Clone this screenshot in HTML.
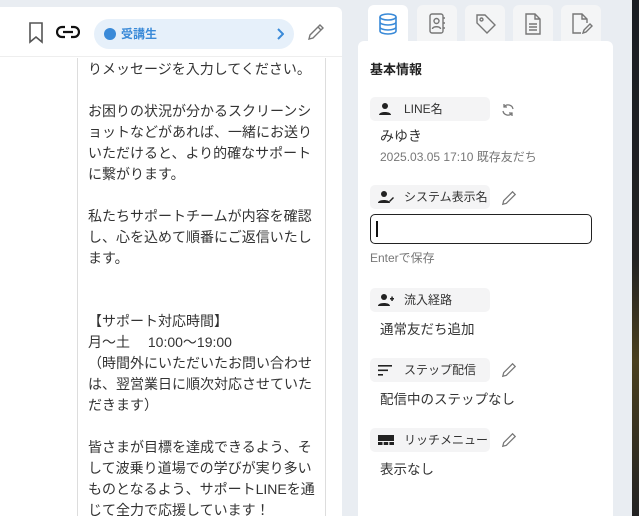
<!DOCTYPE html>
<html><head><meta charset="utf-8"><style>
*{box-sizing:border-box;margin:0;padding:0}
html,body{width:639px;height:516px;overflow:hidden}
body{background:#e9edf2;font-family:"Liberation Sans","Noto Sans CJK JP",sans-serif;position:relative;color:#333}
.left{position:absolute;left:0;top:7px;width:342px;height:509px;background:#fff;border-top-right-radius:6px}
.hdr{position:absolute;left:0;top:0;width:342px;height:50px;border-bottom:1px solid #eee}
.pill{position:absolute;left:94px;top:12px;width:200px;height:30px;border-radius:15px;background:#e6f0fa;color:#3a8ad8;font-weight:bold;font-size:12px;line-height:30px;padding-left:27px}
.pill .dot{position:absolute;left:10px;top:9px;width:12px;height:12px;border-radius:50%;background:#3a8ad8}
.msg{position:absolute;left:77px;top:58px;width:249px;height:458px;overflow:hidden;border-left:1px solid #ddd;border-right:1px solid #ddd;padding:1px 0 0 10px;font-size:14px;line-height:21px;white-space:pre;color:#333}
.dark{position:absolute;left:632px;top:0;width:7px;height:516px;background:linear-gradient(#1a1e24,#222 50%,#4a4020 70%,#222)}
.tab{position:absolute;top:5px;width:40px;height:38px;background:#f4f5f6;border-radius:6px 6px 0 0}
.tab svg{position:absolute;left:10px;top:8px}
.tab.on{background:#fff}
.card{position:absolute;left:358px;top:41px;width:255px;height:475px;background:#fff;border-radius:6px 6px 0 0}
.h{position:absolute;left:12px;top:18px;font-size:13px;font-weight:bold;color:#222}
.lab{position:absolute;left:12px;width:120px;height:24px;background:#f4f4f5;border-radius:5px;font-size:12px;line-height:24px;padding-left:34px;color:#333}
.lab svg{position:absolute;left:8px;top:5px}
.val{position:absolute;left:22px;font-size:13.5px;color:#333}
.pen{position:absolute;left:143px}
</style></head><body>
<div class="left">
 <div class="hdr">
  <svg style="position:absolute;left:28px;top:15px" width="16" height="22" viewBox="0 0 16 22"><path d="M2 1h12v19l-6-5-6 5z" fill="none" stroke="#555" stroke-width="1.6"/></svg>
  <svg style="position:absolute;left:56px;top:17px" width="24" height="16" viewBox="0 0 24 16"><path d="M9 3H6a5 5 0 0 0 0 10h3M15 3h3a5 5 0 0 1 0 10h-3M7 8h10" fill="none" stroke="#111" stroke-width="2.2"/></svg>
  <div class="pill"><span class="dot"></span>受講生<svg style="position:absolute;right:10px;top:9px" width="8" height="12" viewBox="0 0 8 12"><path d="M2 1l5 5-5 5" fill="none" stroke="#3a8ad8" stroke-width="2"/></svg></div>
  <svg style="position:absolute;left:307px;top:16px" width="18" height="18" viewBox="0 0 18 18"><path d="M2 16l1-4L13 2l3 3L6 15z M11 4l3 3" fill="none" stroke="#777" stroke-width="1.4"/></svg>
 </div>
</div>
<div class="msg">りメッセージを入力してください。

お困りの状況が分かるスクリーンシ
ョットなどがあれば、一緒にお送り
いただけると、より的確なサポート
に繋がります。

私たちサポートチームが内容を確認
し、心を込めて順番にご返信いたし
ます。


【サポート対応時間】
月～土　 10:00～19:00
（時間外にいただいたお問い合わせ
は、翌営業日に順次対応させていた
だきます）

皆さまが目標を達成できるよう、そ
して波乗り道場での学びが実り多い
ものとなるよう、サポートLINEを通
じて全力で応援しています！</div>
<div class="dark"></div>
<div class="tab on" style="left:368px"><svg width="20" height="22" viewBox="0 0 20 22" fill="none" stroke="#3a8ad8" stroke-width="1.6"><ellipse cx="10" cy="4" rx="8" ry="3"/><path d="M2 4v14c0 1.7 3.6 3 8 3s8-1.3 8-3V4M2 9c0 1.7 3.6 3 8 3s8-1.3 8-3M2 14c0 1.7 3.6 3 8 3s8-1.3 8-3"/></svg></div>
<div class="tab" style="left:417px"><svg width="20" height="22" viewBox="0 0 20 22" fill="none" stroke="#777" stroke-width="1.4"><rect x="3" y="1" width="13" height="19" rx="2"/><circle cx="9.5" cy="8" r="2.5"/><path d="M5.5 16c0-3 8-3 8 0M16 5h2M16 10h2M16 15h2"/></svg></div>
<div class="tab" style="left:465px"><svg width="22" height="22" viewBox="0 0 22 22" fill="none" stroke="#777" stroke-width="1.4"><path d="M2 2h8l10 10-8 8L2 10z"/><circle cx="6.5" cy="6.5" r="1.5"/></svg></div>
<div class="tab" style="left:513px"><svg width="20" height="22" viewBox="0 0 20 22" fill="none" stroke="#777" stroke-width="1.4"><path d="M3 1h9l5 5v15H3z M12 1v5h5M6 11h8M6 14h8M6 17h8"/></svg></div>
<div class="tab" style="left:561px"><svg width="22" height="22" viewBox="0 0 22 22" fill="none" stroke="#777" stroke-width="1.4"><path d="M10 20H2V1h9l5 5v4M11 1v5h5M12 20l1-3 6-6 2 2-6 6z"/></svg></div>
<div class="card">
 <div class="h">基本情報</div>
 <div class="lab" style="top:56px"><svg width="14" height="14" viewBox="0 0 14 14" fill="#222"><circle cx="7" cy="4" r="3"/><path d="M1 13c0-4 12-4 12 0z"/></svg>LINE名</div>
 <svg style="position:absolute;left:143px;top:62px" width="14" height="14" viewBox="0 0 14 14" fill="none" stroke="#777" stroke-width="1.3"><path d="M12 6A5 5 0 0 0 3 4M2 8a5 5 0 0 0 9 2M3 1v3h3M11 13v-3H8"/></svg>
 <div class="val" style="top:85px;font-size:14px">みゆき</div>
 <div class="val" style="top:107px;font-size:12px;color:#777">2025.03.05 17:10 既存友だち</div>
 <div class="lab" style="top:144px"><svg width="16" height="14" viewBox="0 0 16 14" fill="#222"><circle cx="6" cy="4" r="3"/><path d="M0 13c0-4 12-4 12 0z M11 11l4-4 1 1-4 4z"/></svg>システム表示名</div>
 <svg class="pen" style="top:149px" width="16" height="16" viewBox="0 0 18 18"><path d="M2 16l1-4L13 2l3 3L6 15z" fill="none" stroke="#777" stroke-width="1.4"/></svg>
 <div style="position:absolute;left:12px;top:173px;width:222px;height:30px;border:1.5px solid #222;border-radius:5px"><div style="position:absolute;left:5px;top:6px;width:1.5px;height:16px;background:#111"></div></div>
 <div class="val" style="left:12px;top:208px;font-size:12px;color:#777">Enterで保存</div>
 <div class="lab" style="top:247px"><svg width="16" height="14" viewBox="0 0 16 14" fill="#222"><circle cx="6" cy="4" r="3"/><path d="M0 13c0-4 12-4 12 0z M12 5h4v1.5h-4zM13.3 3.5h1.5v4.5h-1.5z"/></svg>流入経路</div>
 <div class="val" style="top:277px">通常友だち追加</div>
 <div class="lab" style="top:317px"><svg width="14" height="14" viewBox="0 0 14 14" fill="#222"><rect x="0" y="2" width="14" height="1.6"/><rect x="0" y="6.5" width="10" height="1.6"/><rect x="0" y="11" width="5" height="1.6"/></svg>ステップ配信</div>
 <svg class="pen" style="top:321px" width="16" height="16" viewBox="0 0 18 18"><path d="M2 16l1-4L13 2l3 3L6 15z" fill="none" stroke="#777" stroke-width="1.4"/></svg>
 <div class="val" style="top:347px">配信中のステップなし</div>
 <div class="lab" style="top:387px"><svg width="16" height="14" viewBox="0 0 16 14" fill="#222"><rect x="0" y="2" width="16" height="6"/><rect x="0" y="9" width="4.5" height="3"/><rect x="5.7" y="9" width="4.5" height="3"/><rect x="11.4" y="9" width="4.6" height="3"/></svg>リッチメニュー</div>
 <svg class="pen" style="top:391px" width="16" height="16" viewBox="0 0 18 18"><path d="M2 16l1-4L13 2l3 3L6 15z" fill="none" stroke="#777" stroke-width="1.4"/></svg>
 <div class="val" style="top:417px">表示なし</div>
</div>
</body></html>
